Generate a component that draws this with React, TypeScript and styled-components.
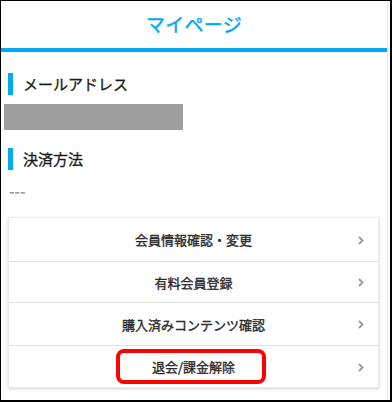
import React from "react";
import styled, { createGlobalStyle } from "styled-components";

const GlobalStyle = createGlobalStyle`
  html, body { margin: 0; padding: 0; background: #fff; }
  body { font-family: "Noto Sans CJK JP", "Noto Sans", sans-serif; color: #222; }
  * { box-sizing: border-box; }
`;

const Frame = styled.div`
  width: 392px;
  height: 402px;
  border-style: solid;
  border-color: #000;
  border-width: 1px 2px 2px 1px;
  background: #fff;
  overflow: hidden;
`;

const Page = styled.div`
  width: 387px;
  height: 100%;
  border-right: 1px solid #e2e2e2;
  display: flex;
  flex-direction: column;
`;

const Header = styled.header`
  height: 51px;
  border-bottom: 4px solid #03a9f4;
  display: flex;
  align-items: center;
  justify-content: center;
  padding-bottom: 3px;
`;

const Title = styled.h1`
  margin: 0;
  font-size: 19px;
  font-weight: 400;
  color: #03a9f4;
  letter-spacing: 0.3px;
  -webkit-text-stroke: 0.45px #03a9f4;
`;

const Content = styled.main`
  padding: 21px 8px 0 7px;
  display: flex;
  flex-direction: column;
`;

const SectionTitle = styled.h2<{ $top?: number }>`
  margin: ${(p) => p.$top ?? 0}px 0 0 0;
  height: 22px;
  border-left: 5px solid #03a9f4;
  padding-left: 10px;
  font-size: 15px;
  font-weight: 400;
  line-height: 22px;
  color: #1a1a1a;
  -webkit-text-stroke: 0.3px #1a1a1a;
`;

const Redacted = styled.div`
  margin: 9px 0 0 -4px;
  width: 179px;
  height: 26px;
  background: #9e9e9e;
`;

const Placeholder = styled.div`
  margin-top: 13px;
  font-size: 15px;
  font-weight: 700;
  line-height: 16px;
  color: #9a9a9a;
  padding-left: 1px;
`;

const Card = styled.nav`
  margin-top: 18px;
  width: 371px;
  border: 1px solid #ececec;
  background: #fff;
  box-shadow: 0 1px 3px rgba(0, 0, 0, 0.18);
  display: flex;
  flex-direction: column;
`;

const Row = styled.a<{ $h: number }>`
  position: relative;
  height: ${(p) => p.$h}px;
  display: flex;
  align-items: center;
  justify-content: center;
  font-size: 13px;
  font-weight: 400;
  color: #2a2a2a;
  -webkit-text-stroke: 0.35px #2a2a2a;
  text-decoration: none;
  & + & { border-top: 1px solid #e2e2e2; }
`;

const Chevron = styled.svg`
  position: absolute;
  right: 14px;
  top: 50%;
  margin-top: -4px;
  width: 6px;
  height: 9px;
`;

const Highlight = styled.span`
  position: absolute;
  left: 107px;
  top: 3px;
  width: 150px;
  height: 35px;
  border: 4px solid #ff0000;
  border-radius: 8px;
  pointer-events: none;
`;

const items = [
  { label: "会員情報確認・変更", h: 43 },
  { label: "有料会員登録", h: 41 },
  { label: "購入済みコンテンツ確認", h: 43 },
  { label: "退会/課金解除", h: 42, mark: true },
];

export default function App() {
  return (
    <>
      <GlobalStyle />
      <Frame>
        <Page>
          <Header>
            <Title>マイページ</Title>
          </Header>
          <Content>
            <SectionTitle>メールアドレス</SectionTitle>
            <Redacted />
            <SectionTitle $top={18}>決済方法</SectionTitle>
            <Placeholder>---</Placeholder>
            <Card>
              {items.map((it) => (
                <Row key={it.label} $h={it.h} href="#">
                  {it.label}
                  <Chevron viewBox="0 0 6 9">
                    <polyline points="1,1 4.5,4.5 1,8" fill="none" stroke="#999" strokeWidth="1.8" />
                  </Chevron>
                  {it.mark && <Highlight />}
                </Row>
              ))}
            </Card>
          </Content>
        </Page>
      </Frame>
    </>
  );
}
